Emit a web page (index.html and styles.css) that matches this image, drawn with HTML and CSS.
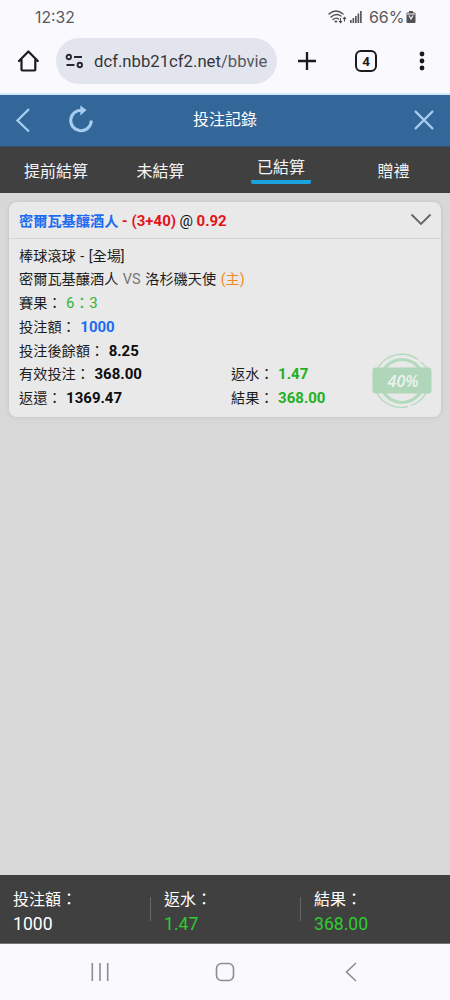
FILE: index.html
```html
<!DOCTYPE html>
<html lang="zh-Hant">
<head>
    <meta charset="UTF-8">
    <meta name="viewport" content="width=device-width, initial-scale=1">
    <title>投注記錄</title>
    <link rel="stylesheet" href="styles.css">
</head>
<body>
    <div class="status-bar">
        <span class="clock">12:32</span>
        <svg class="wifi-icon" width="20" height="16" viewBox="0 0 20 16" fill="none" stroke="#505055" stroke-width="1.4" stroke-linecap="round">
            <path d="M1 5Q8 -1 15 5M3 8Q8 3.500 13 7M5 10.500Q8 8 10.500 10"/>
            <path d="M7.500 12.500h.8" stroke-width="2"/>
            <path d="M12.500 9.500v4M11.300 12.300l1.200 1.300 1.200-1.300M16.500 12V8.500M15.300 9.600l1.200-1.300 1.200 1.300" stroke-width="1.100"/>
        </svg>
        <svg class="signal-icon" width="13" height="14" viewBox="0 0 13 14" fill="#5a5a5f">
            <path d="M0 10h1.700v3H0zM2.500 8h1.700v5H2.500zM5 6h1.700v7H5zM7.500 3.500h1.700V13H7.500zM10 1h1.700v12H10z"/>
        </svg>
        <span class="battery">66%</span>
        <svg class="battery-icon" width="10" height="14" viewBox="0 0 10 14">
            <path d="M3 1h4v1.500h1.500Q9.500 2.500 9.500 3.500v8.500q0 1-1 1h-7q-1 0-1-1V3.500q0-1 1-1H3z" fill="#505055"/>
            <path d="M1 3h8v2H1z" fill="#a5a5aa"/>
            <path d="M3 5.500L5 9l2-3.500M5 8v2" fill="none" stroke="#e8e8ee" stroke-width="1.300"/>
        </svg>
    </div>

    <div class="browser-bar">
        <svg class="home-icon" width="24" height="24" viewBox="0 0 24 24" fill="none" stroke="#1b1b1f" stroke-width="2.200" stroke-linejoin="round" stroke-linecap="round">
            <path d="M3 12L12.400 2.500L21.800 12M5.500 10.500V20.500q0 1 1 1h11.800q1 0 1-1V10.500"/>
        </svg>
        <div class="address">
            <svg width="20" height="16" viewBox="0 0 20 16" fill="none" stroke="#26272c" stroke-width="1.900">
                <circle cx="3.800" cy="4" r="2.200"/>
                <path d="M9 4H17M1.500 12h8"/>
                <circle cx="14.800" cy="12" r="2.200"/>
            </svg>
            <span>dcf.nbb21cf2.net<i>/bbvie</i></span>
        </div>
        <svg class="plus-icon" width="20" height="20" viewBox="0 0 20 20" stroke="#1b1b1f" stroke-width="2.300">
            <path d="M10 1v18M1 10h18"/>
        </svg>
        <div class="tab-count">4</div>
        <svg class="more-icon" width="6" height="20" viewBox="0 0 6 20" fill="#1b1b1f">
            <circle cx="3" cy="3" r="2.400"/>
            <circle cx="3" cy="10" r="2.400"/>
            <circle cx="3" cy="17" r="2.400"/>
        </svg>
    </div>

    <header>
        <div class="header-left">
            <svg width="16" height="26" viewBox="0 0 16 26" fill="none" stroke="#a5cdf2" stroke-width="2.300">
                <path d="M14 2L2.500 13.500L14 24.500"/>
            </svg>
            <svg class="reload-icon" width="26" height="28" viewBox="0 0 26 28">
                <path d="M14 5.200A10.300 10.300 0 1 0 23.300 15.500" fill="none" stroke="#a5cdf2" stroke-width="3"/>
                <path d="M12.300 0.500L18.600 5L12.300 10.500z" fill="#a5cdf2"/>
            </svg>
        </div>
        <h1>投注記錄</h1>
        <div class="header-right">
            <svg width="20" height="20" viewBox="0 0 20 20" stroke="#a9cfee" stroke-width="2.300">
                <path d="M1 1L19 19M19 1L1 19"/>
            </svg>
        </div>
    </header>

    <nav>
        <a>提前結算</a>
        <a>未結算</a>
        <a class="active"><span>已結算</span></a>
        <a>贈禮</a>
    </nav>

    <main>
        <div class="card">
            <div class="card-head">
                <div class="bet"><b class="team">密爾瓦基釀酒人</b> <b class="odds">- (3+40)</b> <span class="at">@</span> <b class="odds">0.92</b></div>
                <svg width="22" height="13" viewBox="0 0 22 13" fill="none" stroke="#66666a" stroke-width="1.800">
                    <path d="M1.500 1.500L11 11L20.500 1.500"/>
                </svg>
            </div>
            <div class="card-body">
                <div>棒球滾球 - [全場]</div>
                <div>密爾瓦基釀酒人 <span class="vs">VS</span> 洛杉磯天使 <span class="home-mark">(主)</span></div>
                <div>賽果： <span class="score">6：3</span></div>
                <div>投注額： <b class="stake">1000</b></div>
                <div>投注後餘額： <b>8.25</b></div>
                <div class="pair"><span>有效投注： <b>368.00</b></span><span>返水： <b class="win">1.47</b></span></div>
                <div class="pair"><span>返還： <b>1369.47</b></span><span>結果： <b class="win">368.00</b></span></div>
                <svg class="stamp" width="60" height="56" viewBox="0 0 60 56">
                    <g fill="none" stroke="#b2dabd">
                        <path d="M6 15A27 26 0 0 1 46 6.500M49 9A27 26 0 0 1 55 16" stroke-width="1.300"/>
                        <path d="M5 40A27 26 0 0 0 36 53.500M39 52.500A27 26 0 0 0 54 40" stroke-width="1.300"/>
                        <circle cx="30" cy="28" r="21.500" stroke-width="3.200"/>
                    </g>
                    <rect x="0.500" y="14.500" width="59" height="26" rx="3" fill="#afd6b9"/>
                    <text x="31" y="34" text-anchor="middle">40%</text>
                </svg>
            </div>
        </div>
    </main>

    <div class="summary">
        <div><span>投注額：</span><em>1000</em></div>
        <div><span>返水：</span><em class="green">1.47</em></div>
        <div><span>結果：</span><em class="green">368.00</em></div>
    </div>

    <footer>
        <svg width="18" height="18" viewBox="0 0 18 18" stroke="#8c8c91" stroke-width="1.600">
            <path d="M1.300 0v18M9 0v18M16.700 0v18"/>
        </svg>
        <svg class="nav-home" width="20" height="20" viewBox="0 0 20 20" fill="none" stroke="#8c8c91" stroke-width="1.600">
            <rect x="1.500" y="1.500" width="17" height="17" rx="5"/>
        </svg>
        <svg width="12" height="20" viewBox="0 0 12 20" fill="none" stroke="#8c8c91" stroke-width="1.600">
            <path d="M11 1L1.500 10L11 19"/>
        </svg>
    </footer>
</body>
</html>
```
FILE: styles.css
```css
* {
    box-sizing: border-box;
}
body {
    font-family: Roboto, "Noto Sans CJK TC", sans-serif;
    background-color: #d8d8d8;
    margin: 0;
    height: 1000px;
    display: flex;
    flex-direction: column;
    overflow: hidden;
}
svg {
    display: block;
    flex-shrink: 0;
}

/* Phone status bar */
.status-bar {
    height: 34px;
    background-color: #faf9fe;
    color: #58585d;
    display: flex;
    align-items: center;
    padding: 0 34px 0 35px;
    font-family: Inter, sans-serif;
    font-size: 16px;
}
.clock {
    flex: 1;
    font-size: 15.7px;
}
.signal-icon {
    margin: 0 6px 0 2px;
}
.battery {
    width: 37px;
    letter-spacing: -0.1px;
    white-space: nowrap;
}

/* Browser toolbar */
.browser-bar {
    height: 61px;
    background-color: #faf9fe;
    border-bottom: 2px solid #d4e8fb;
    display: flex;
    align-items: center;
    padding: 0 25px 5px 16px;
}
.address {
    width: 221px;
    height: 46px;
    margin-left: 16px;
    padding-left: 9px;
    border-radius: 23px;
    background-color: #e3e5ee;
    color: #34353a;
    display: flex;
    align-items: center;
    gap: 9px;
    font-size: 16.7px;
    white-space: nowrap;
}
.address i {
    font-style: normal;
    color: #55565d;
}
.plus-icon {
    margin-left: 20px;
}
.tab-count {
    width: 22px;
    height: 22px;
    margin: 0 auto 0 38px;
    border: 2.2px solid #1b1b1f;
    border-radius: 6px;
    text-align: center;
    font-size: 13.5px;
    font-weight: bold;
    line-height: 18px;
    color: #1b1b1f;
}

/* Page header */
header {
    height: 52px;
    background-color: #336699;
    border-bottom: 1px solid #35546c;
    display: flex;
    align-items: center;
    padding: 0 16px 1px 15px;
}
.header-left {
    flex: 1;
    display: flex;
    align-items: center;
}
.reload-icon {
    margin-left: 37px;
    margin-top: -3px;
}
.header-right {
    flex: 1;
    display: flex;
    justify-content: flex-end;
}
h1 {
    margin: 0;
    padding-left: 1px;
    font-size: 16px;
    line-height: 24px;
    font-weight: normal;
    color: #fff;
}

/* Tabs */
nav {
    height: 46px;
    background-color: #404040;
    color: #f5f5f5;
    display: grid;
    grid-template-columns: 112px 97px 144px 81px;
    font-size: 16px;
    line-height: 24px;
    text-align: center;
}
nav a {
    padding-top: 13px;
}
nav .active {
    padding-top: 9px;
}
.active span {
    display: block;
    width: 60px;
    height: 28px;
    margin: 0 auto;
    border-bottom: 4px solid #1aa3dd;
    border-radius: 2px;
    white-space: nowrap;
}

/* Bet record */
main {
    flex: 1;
    padding: 9px 9px;
}
.card {
    background-color: #e9e9e9;
    border-radius: 8px;
    box-shadow: 0 0 4px rgba(0, 0, 0, 0.12);
    font-size: 14.2px;
    color: #1d1d1d;
    white-space: nowrap;
}
.card-head {
    height: 37px;
    border-bottom: 1px solid #d2d6d9;
    display: flex;
    align-items: center;
    justify-content: space-between;
    padding: 0 9px 1px 10px;
}
.card-head .odds, .card-head .at {
    font-size: 15px;
}
.team {
    color: #1c6cf0;
}
.odds {
    color: #e4131a;
}
.at {
    color: #111;
}
.card-body {
    position: relative;
    padding: 5.5px 10px 6px;
    line-height: 23.8px;
    word-spacing: 1px;
}
.card-body > div {
    height: 23.8px;
}
.card-body b {
    color: #0c0c0c;
    font-size: 15px;
}
.vs {
    color: #77777a;
    font-size: 14.5px;
}
.home-mark {
    color: #f08a1c;
}
.score {
    color: #32b432;
    font-size: 14.9px;
}
.card-body .stake {
    color: #1c6cf0;
}
.card-body .win {
    color: #22b022;
}
.pair {
    display: grid;
    grid-template-columns: 212px 1fr;
}
.stamp {
    position: absolute;
    right: 9px;
    bottom: 8px;
}
.stamp text {
    fill: #edf3ee;
    font-family: "Open Sans", sans-serif;
    font-size: 16px;
    font-style: italic;
    font-weight: 600;
}

/* Totals */
.summary {
    height: 69px;
    background-color: #404040;
    border-bottom: 1px solid #777;
    color: #fff;
    display: grid;
    grid-template-columns: repeat(3, 150px);
    align-items: center;
    font-size: 16px;
}
.summary div {
    height: 24px;
    padding-left: 13px;
    display: flex;
    flex-direction: column;
    justify-content: center;
    line-height: 24px;
}
.summary div + div {
    border-left: 1px solid #666;
}
.summary span {
    padding-top: 6px;
}
.summary em {
    font-style: normal;
    font-size: 17.6px;
}
.summary .green {
    color: #2fcc2f;
}

/* Android navigation */
footer {
    height: 56px;
    background-color: #faf9fe;
    display: flex;
    align-items: center;
    justify-content: space-between;
    padding: 0 93px 1px 91px;
}
.nav-home {
    margin-right: 4px;
}
```
